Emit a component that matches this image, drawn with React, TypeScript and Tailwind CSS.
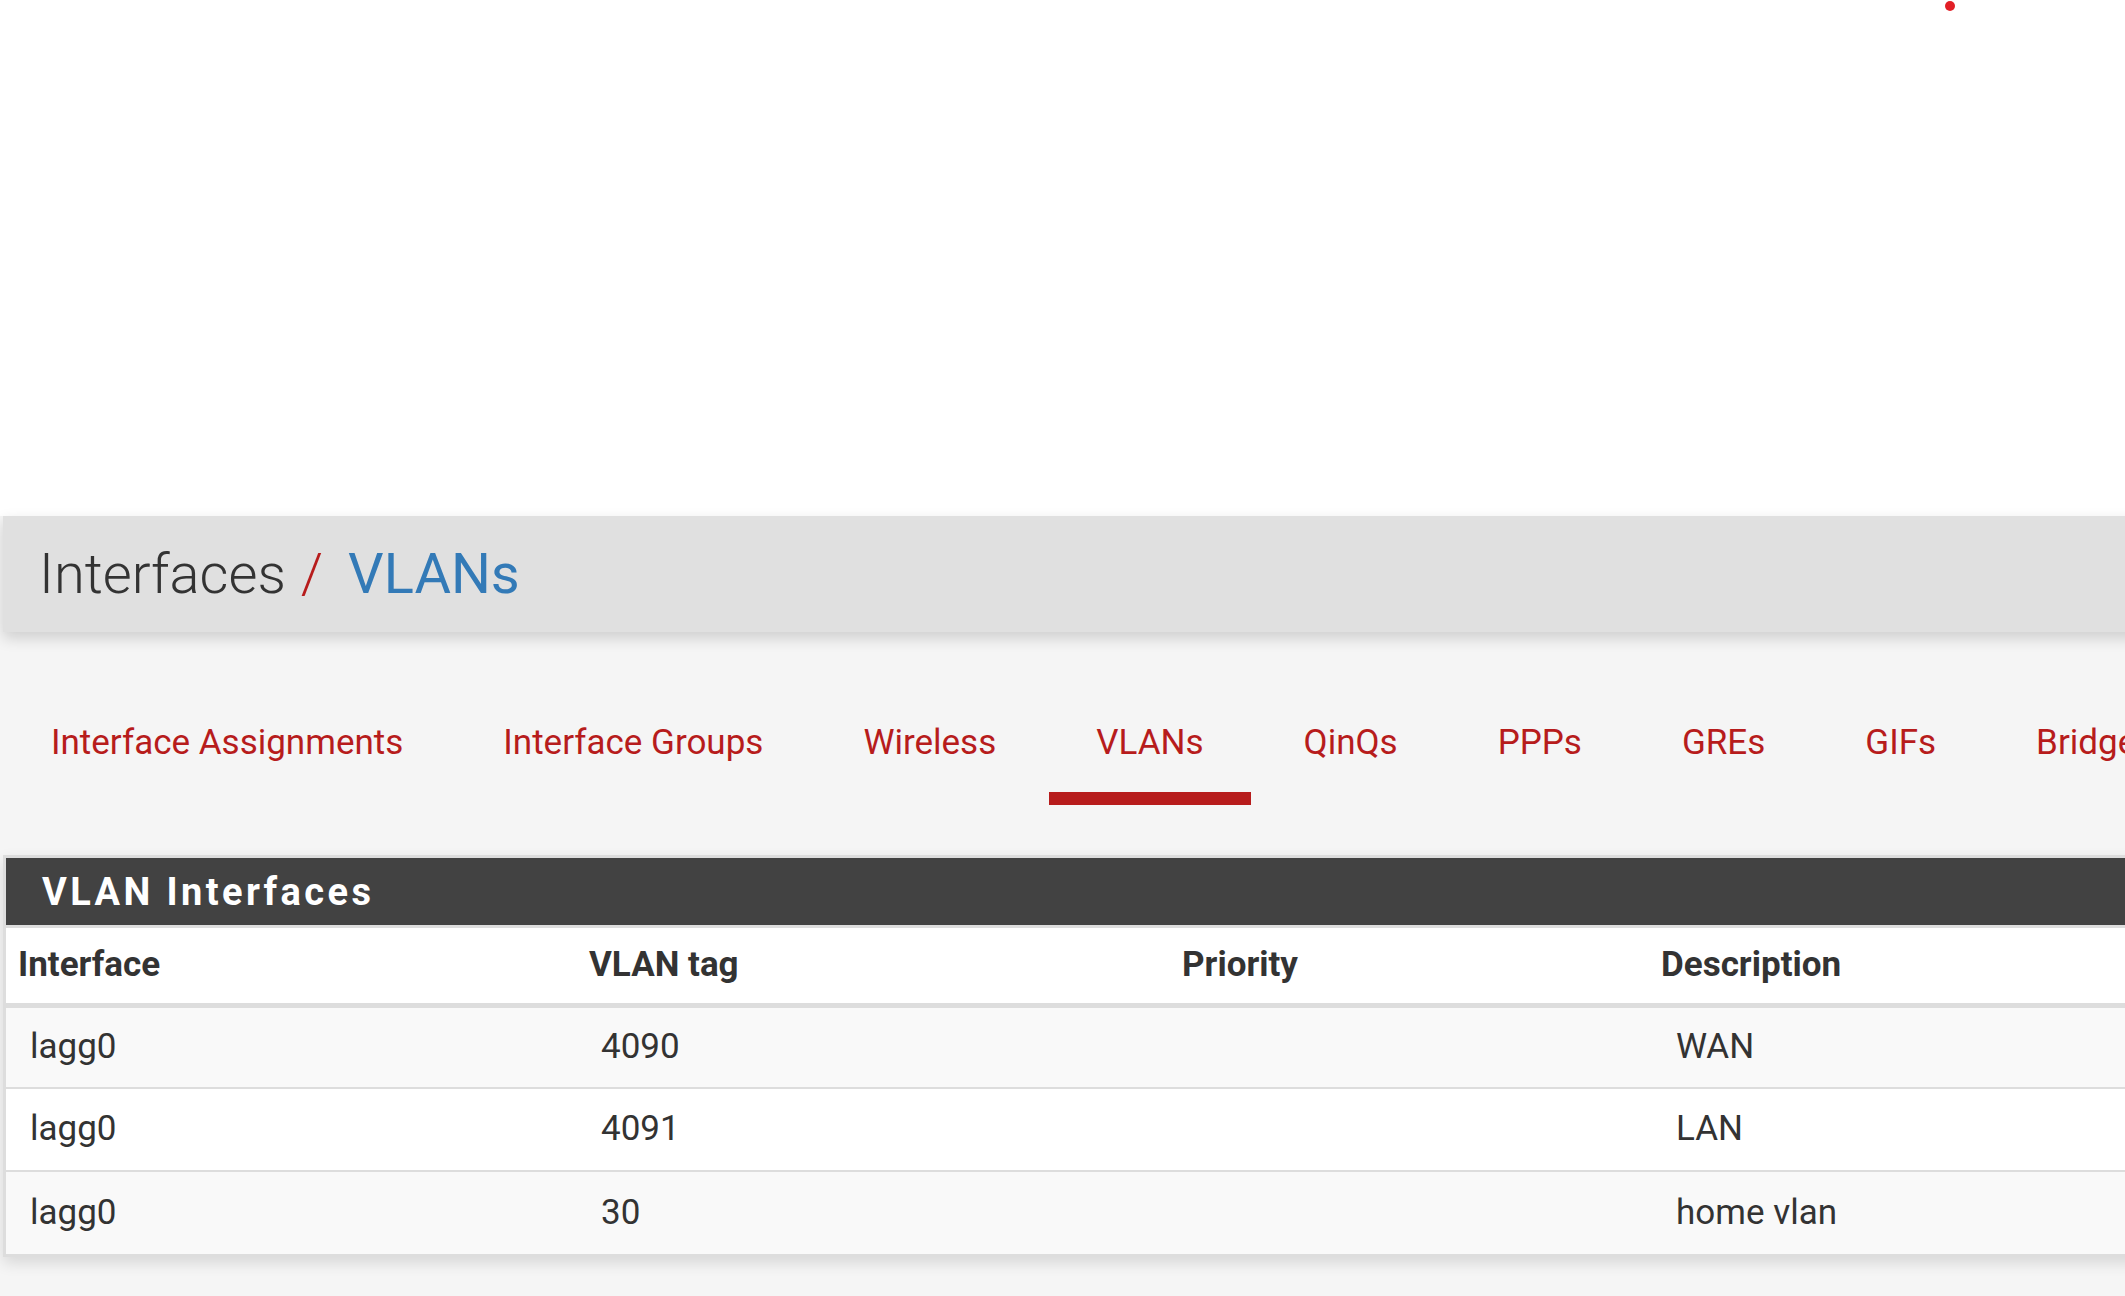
import type { ReactElement } from "react";

interface Vlan {
  iface: string;
  tag: string;
  priority: string;
  description: string;
}

const tabs = [
  "Interface Assignments",
  "Interface Groups",
  "Wireless",
  "VLANs",
  "QinQs",
  "PPPs",
  "GREs",
  "GIFs",
  "Bridges",
  "LAGGs",
];

const vlans: Vlan[] = [
  { iface: "lagg0", tag: "4090", priority: "", description: "WAN" },
  { iface: "lagg0", tag: "4091", priority: "", description: "LAN" },
  { iface: "lagg0", tag: "30", priority: "", description: "home vlan" },
];

export default function App(): ReactElement {
  return (
    <div
      className="relative w-full h-[1296px] overflow-hidden bg-[#f5f5f5] text-[#333333]"
      style={{ fontFamily: "Roboto, 'Liberation Sans', sans-serif" }}
    >
      {/* top navbar area (blank) */}
      <div className="h-[516px] bg-white">
        <span className="absolute left-[1945px] top-[1px] w-[10px] h-[10px] rounded-full bg-[#e21f26]" />
      </div>

      <div className="w-[2600px]">
        {/* breadcrumb */}
        <div className="ml-[3px] h-[116px] bg-[#e0e0e0] shadow-[0_6px_14px_rgba(0,0,0,0.16)] flex items-center pl-[36px]">
          <h1 className="text-[56px] leading-none font-light whitespace-pre">
            Interfaces
            <span className="text-[#b71c1c] ml-[15px] mr-[25px]">/</span>
            <span className="text-[#337ab7] font-normal">VLANs</span>
          </h1>
        </div>

        {/* tabs */}
        <ul className="flex gap-[6px] pl-[4px] mt-[87px]">
          {tabs.map((t) => (
            <li key={t}>
              <a
                href="#"
                className={
                  "block px-[47px] pb-[25px] border-b-[13px] text-[35px] leading-[48px] text-[#b71c1c] whitespace-nowrap " +
                  (t === "VLANs" ? "border-[#b71c1c]" : "border-transparent")
                }
              >
                {t}
              </a>
            </li>
          ))}
        </ul>

        {/* panel */}
        <div className="ml-[3px] mt-[50px] border-[3px] border-[#dddddd] bg-white shadow-[0_6px_14px_rgba(0,0,0,0.12)]">
          <div className="h-[67px] bg-[#424242] flex items-center pl-[36px]">
            <h2 className="text-[38px] font-bold tracking-[3.4px] text-white leading-none">VLAN Interfaces</h2>
          </div>
          <div className="border-t-[3px] border-[#dddddd]">
            <table className="table-fixed border-collapse w-full">
              <colgroup>
                <col className="w-[571px]" />
                <col className="w-[593px]" />
                <col className="w-[479px]" />
                <col />
              </colgroup>
              <thead>
                <tr className="h-[77px] bg-white border-b-[5px] border-[#dddddd]">
                  {["Interface", "VLAN tag", "Priority", "Description"].map((h) => (
                    <th key={h} className="pl-[12px] text-left text-[35px] font-bold align-middle">
                      {h}
                    </th>
                  ))}
                </tr>
              </thead>
              <tbody>
                {vlans.map((v, i) => (
                  <tr
                    key={v.tag}
                    className={
                      "h-[83px] text-[35px] " +
                      (i % 2 === 0 ? "bg-[#f9f9f9]" : "bg-white") +
                      (i < vlans.length - 1 ? " border-b-[2px] border-[#dddddd]" : "")
                    }
                  >
                    <td className="pl-[24px] align-middle">{v.iface}</td>
                    <td className="pl-[24px] align-middle">{v.tag}</td>
                    <td className="pl-[24px] align-middle">{v.priority}</td>
                    <td className="pl-[27px] align-middle">{v.description}</td>
                  </tr>
                ))}
              </tbody>
            </table>
          </div>
        </div>
      </div>
    </div>
  );
}
